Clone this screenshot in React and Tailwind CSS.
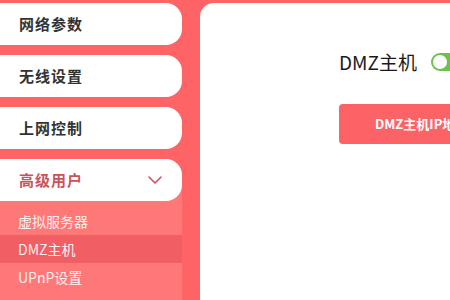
import React from "react";

const font = { fontFamily: '"Noto Sans CJK SC", "Noto Sans", sans-serif' };

const menu = ["网络参数", "无线设置", "上网控制"];
const subMenu = ["虚拟服务器", "DMZ主机", "UPnP设置"];

const App = () => {
  return (
    <div
      className="w-[450px] h-[300px] bg-[#fe6365] flex overflow-hidden"
      style={font}
    >
      {/* Sidebar */}
      <div className="w-[182px] shrink-0 pt-[3px] flex flex-col gap-[10px]">
        {menu.map((m) => (
          <div
            key={m}
            className="h-[42px] shrink-0 bg-white rounded-r-[16px] flex items-center pl-[19px] text-[15px] font-bold text-[#333] tracking-[1px]"
          >
            {m}
          </div>
        ))}

        {/* Expanded group */}
        <div className="shrink-0 bg-[#ff7878] rounded-tr-[16px] flex flex-col">
          <div className="h-[42px] shrink-0 bg-white rounded-r-[16px] flex items-center justify-between pl-[19px] pr-[20px] text-[15px] font-bold text-[#c9545c] tracking-[1px]">
            <span>高级用户</span>
            <svg width="14" height="8" viewBox="0 0 14 8" fill="none">
              <path
                d="M1 1l6 6 6-6"
                stroke="#c9545c"
                strokeWidth="1.6"
                strokeLinecap="round"
                strokeLinejoin="round"
              />
            </svg>
          </div>
          <div className="pt-[6px] pb-[20px] flex flex-col">
            {subMenu.map((s) => (
              <div
                key={s}
                className={
                  "h-[28px] shrink-0 flex items-center pl-[18px] text-[14px] text-[#fff0f0] " +
                  (s === "DMZ主机" ? "bg-[#f15e64]" : "")
                }
              >
                {s}
              </div>
            ))}
          </div>
        </div>
      </div>

      {/* Main panel */}
      <div className="ml-[18px] mt-[3px] flex-1 bg-white rounded-tl-[14px] pl-[139px] pt-[45px] min-w-0">
        <div className="flex items-center gap-[14px] h-[28px] whitespace-nowrap">
          <span className="text-[19px] text-[#1a1a1a]">DMZ主机</span>
          <div className="w-[40px] h-[18px] shrink-0 rounded-full bg-[#6cc24a] flex items-center pl-[2px]">
            <div className="w-[14px] h-[14px] rounded-full bg-white" />
          </div>
        </div>
        <button className="mt-[28px] w-[220px] h-[40px] rounded-[4px] bg-[#fb6367] text-white text-[13px] font-bold text-left pl-[36px] whitespace-nowrap">
          DMZ主机IP地址设置
        </button>
      </div>
    </div>
  );
};

export default App;
